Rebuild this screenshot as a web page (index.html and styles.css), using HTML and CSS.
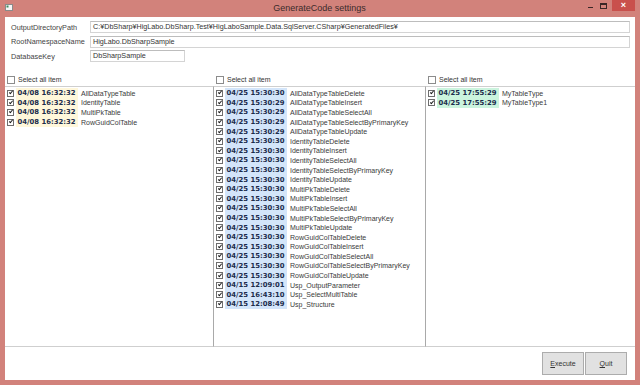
FILE: index.html
```html
<!DOCTYPE html>
<html lang="en">
  <head>
    <meta charset="UTF-8" />
    <title>GenerateCode settings</title>
    <link rel="stylesheet" href="styles.css">
  </head>
  <body>
    <div class="window">
      <div class="titlebar">
        <svg class="titlebar__icon" width="8" height="7" viewBox="0 0 8 7">
          <rect x="0.5" y="0.5" width="7" height="6" fill="#f4f4f4" stroke="#8a8a8a" />
          <rect x="1.5" y="1.5" width="2" height="2" fill="#3a8a5a" />
        </svg>
        <div class="titlebar__title">GenerateCode settings</div>
        <div class="titlebar__controls">
          <span class="ctl ctl--min"></span>
          <span class="ctl ctl--max"></span>
          <span class="ctl ctl--close">&times;</span>
        </div>
      </div>

      <div class="client">
        <div class="form">
          <div class="form__row">
            <span class="form__label">OutputDirectoryPath</span>
            <div class="form__input">C:&yen;DbSharp&yen;HigLabo.DbSharp.Test&yen;HigLaboSample.Data.SqlServer.CSharp&yen;GeneratedFiles&yen;</div>
          </div>
          <div class="form__row">
            <span class="form__label">RootNamespaceName</span>
            <div class="form__input">HigLabo.DbSharpSample</div>
          </div>
          <div class="form__row">
            <span class="form__label">DatabaseKey</span>
            <div class="form__input form__input--short">DbSharpSample</div>
          </div>
        </div>

        <div class="lists">
          <div class="col col--table">
            <div class="col__head"><span class="cb"></span>Select all item</div>
            <div class="col__list">
              <div class="item"><span class="cb cb--on"></span><span class="item__date">04/08 16:32:32</span><span class="item__name">AllDataTypeTable</span></div>
              <div class="item"><span class="cb cb--on"></span><span class="item__date">04/08 16:32:32</span><span class="item__name">IdentityTable</span></div>
              <div class="item"><span class="cb cb--on"></span><span class="item__date">04/08 16:32:32</span><span class="item__name">MultiPkTable</span></div>
              <div class="item"><span class="cb cb--on"></span><span class="item__date">04/08 16:32:32</span><span class="item__name">RowGuidColTable</span></div>
            </div>
          </div>

          <div class="col col--proc">
            <div class="col__head"><span class="cb"></span>Select all item</div>
            <div class="col__list">
              <div class="item"><span class="cb cb--on"></span><span class="item__date">04/25 15:30:30</span><span class="item__name">AllDataTypeTableDelete</span></div>
              <div class="item"><span class="cb cb--on"></span><span class="item__date">04/25 15:30:29</span><span class="item__name">AllDataTypeTableInsert</span></div>
              <div class="item"><span class="cb cb--on"></span><span class="item__date">04/25 15:30:29</span><span class="item__name">AllDataTypeTableSelectAll</span></div>
              <div class="item"><span class="cb cb--on"></span><span class="item__date">04/25 15:30:29</span><span class="item__name">AllDataTypeTableSelectByPrimaryKey</span></div>
              <div class="item"><span class="cb cb--on"></span><span class="item__date">04/25 15:30:29</span><span class="item__name">AllDataTypeTableUpdate</span></div>
              <div class="item"><span class="cb cb--on"></span><span class="item__date">04/25 15:30:30</span><span class="item__name">IdentityTableDelete</span></div>
              <div class="item"><span class="cb cb--on"></span><span class="item__date">04/25 15:30:30</span><span class="item__name">IdentityTableInsert</span></div>
              <div class="item"><span class="cb cb--on"></span><span class="item__date">04/25 15:30:30</span><span class="item__name">IdentityTableSelectAll</span></div>
              <div class="item"><span class="cb cb--on"></span><span class="item__date">04/25 15:30:30</span><span class="item__name">IdentityTableSelectByPrimaryKey</span></div>
              <div class="item"><span class="cb cb--on"></span><span class="item__date">04/25 15:30:30</span><span class="item__name">IdentityTableUpdate</span></div>
              <div class="item"><span class="cb cb--on"></span><span class="item__date">04/25 15:30:30</span><span class="item__name">MultiPkTableDelete</span></div>
              <div class="item"><span class="cb cb--on"></span><span class="item__date">04/25 15:30:30</span><span class="item__name">MultiPkTableInsert</span></div>
              <div class="item"><span class="cb cb--on"></span><span class="item__date">04/25 15:30:30</span><span class="item__name">MultiPkTableSelectAll</span></div>
              <div class="item"><span class="cb cb--on"></span><span class="item__date">04/25 15:30:30</span><span class="item__name">MultiPkTableSelectByPrimaryKey</span></div>
              <div class="item"><span class="cb cb--on"></span><span class="item__date">04/25 15:30:30</span><span class="item__name">MultiPkTableUpdate</span></div>
              <div class="item"><span class="cb cb--on"></span><span class="item__date">04/25 15:30:30</span><span class="item__name">RowGuidColTableDelete</span></div>
              <div class="item"><span class="cb cb--on"></span><span class="item__date">04/25 15:30:30</span><span class="item__name">RowGuidColTableInsert</span></div>
              <div class="item"><span class="cb cb--on"></span><span class="item__date">04/25 15:30:30</span><span class="item__name">RowGuidColTableSelectAll</span></div>
              <div class="item"><span class="cb cb--on"></span><span class="item__date">04/25 15:30:30</span><span class="item__name">RowGuidColTableSelectByPrimaryKey</span></div>
              <div class="item"><span class="cb cb--on"></span><span class="item__date">04/25 15:30:30</span><span class="item__name">RowGuidColTableUpdate</span></div>
              <div class="item"><span class="cb cb--on"></span><span class="item__date">04/15 12:09:01</span><span class="item__name">Usp_OutputParameter</span></div>
              <div class="item"><span class="cb cb--on"></span><span class="item__date">04/25 16:43:10</span><span class="item__name">Usp_SelectMultiTable</span></div>
              <div class="item"><span class="cb cb--on"></span><span class="item__date">04/15 12:08:49</span><span class="item__name">Usp_Structure</span></div>
            </div>
          </div>

          <div class="col col--type">
            <div class="col__head"><span class="cb"></span>Select all item</div>
            <div class="col__list">
              <div class="item"><span class="cb cb--on"></span><span class="item__date">04/25 17:55:29</span><span class="item__name">MyTableType</span></div>
              <div class="item"><span class="cb cb--on"></span><span class="item__date">04/25 17:55:29</span><span class="item__name">MyTableType1</span></div>
            </div>
          </div>
        </div>

        <div class="actions">
          <button class="btn"><u>E</u>xecute</button>
          <button class="btn"><u>Q</u>uit</button>
        </div>
      </div>
    </div>
  </body>
</html>
```

FILE: styles.css
```css
*,
*::before,
*::after {
  box-sizing: border-box;
  margin: 0;
  padding: 0;
}

:root {
  --frame: #d2827b;
  --close: #c9504c;
  --text: #3a3a3a;
  --line: #cfcfcf;
  --sep: #a9a9a9;
}

body {
  width: 640px;
  height: 385px;
  overflow: hidden;
  background-color: var(--frame);
  font-family: "Liberation Sans", Arial, sans-serif;
  color: var(--text);
}

.window {
  display: flex;
  flex-direction: column;
  height: 385px;
}

/* title bar */
.titlebar {
  display: flex;
  align-items: flex-start;
  height: 17px;
}
.titlebar__icon {
  margin: 4px 0 0 5px;
}
.titlebar__title {
  flex: 1;
  text-align: center;
  font-size: 9px;
  line-height: 17px;
  color: #3c2c2c;
  padding-left: 42px;
}
.titlebar__controls {
  display: flex;
  align-items: flex-start;
  margin-right: 5px;
}
.ctl {
  display: block;
  width: 13px;
  height: 11px;
  position: relative;
}
.ctl--min::after {
  content: "";
  position: absolute;
  left: 4px;
  top: 7px;
  width: 5px;
  height: 1px;
  background-color: #3a2626;
}
.ctl--max::after {
  content: "";
  position: absolute;
  left: 3px;
  top: 3px;
  width: 7px;
  height: 6px;
  border: 1px solid #3a2626;
  border-top-width: 2px;
}
.ctl--close {
  width: 23px;
  margin-left: 2px;
  background-color: var(--close);
  color: #fff;
  font-size: 9px;
  line-height: 10px;
  text-align: center;
  font-weight: bold;
}

/* client area */
.client {
  flex: 1;
  display: flex;
  flex-direction: column;
  margin: 0 5px 5px;
  background-color: #fff;
}

.form {
  display: flex;
  flex-direction: column;
  gap: 2.5px;
  padding: 4px 5px 0 6px;
  height: 45px;
}
.form__row {
  display: flex;
  align-items: center;
  height: 12px;
}
.form__label {
  width: 79px;
  font-size: 7.3px;
  color: #444;
}
.form__input {
  flex: 1;
  height: 12px;
  border: 1px solid #d4d4d4;
  border-top-color: #bdbdbd;
  font-size: 7.2px;
  line-height: 10px;
  padding-left: 2px;
  color: #333;
  white-space: nowrap;
}
.form__input--short {
  flex: none;
  width: 95px;
}

/* lists */
.lists {
  display: grid;
  grid-template-columns: 209px 212px 1fr;
  height: 285px;
}
.col {
  display: flex;
  flex-direction: column;
}
.col__head {
  display: flex;
  align-items: center;
  height: 24px;
  padding: 11px 0 0 2px;
  font-size: 7px;
  color: #333;
}
.col__head .cb {
  width: 8px;
  height: 8px;
  margin-right: 3px;
  border-color: #8c8c8c;
}
.col__list {
  flex: 1;
  border-top: 1px solid var(--line);
  border-bottom: 1px solid var(--line);
  padding-top: 1.5px;
}
.col--table .col__list,
.col--proc .col__list {
  border-right: 1px solid var(--sep);
}

.item {
  display: flex;
  align-items: center;
  height: 9.6px;
  font-size: 7px;
}
.cb {
  display: inline-block;
  position: relative;
  width: 7px;
  height: 7px;
  border: 1px solid #6e6e6e;
  background-color: #fff;
  flex: none;
}
.item .cb {
  margin: 0 2px;
}
.cb--on::after {
  content: "";
  position: absolute;
  left: 1.5px;
  top: -0.5px;
  width: 2px;
  height: 4px;
  border: solid #1e1e1e;
  border-width: 0 1.3px 1.3px 0;
  transform: rotate(40deg);
}
.item__date {
  width: 62px;
  height: 10px;
  line-height: 10px;
  padding-left: 1.5px;
  font-family: "DejaVu Sans", Verdana, sans-serif;
  font-weight: bold;
  font-size: 6.85px;
  color: #1c2c4c;
}
.item__name {
  margin-left: 3px;
  color: #3a3a3a;
  white-space: nowrap;
}
.col--table .item__date {
  background-color: #fff7da;
}
.col--proc .item__date {
  background-color: #d3e5fa;
}
.col--type .item__date {
  background-color: #cbf4de;
}

/* bottom buttons */
.actions {
  display: flex;
  justify-content: flex-end;
  align-items: flex-start;
  flex: 1;
  padding: 5px 8px 0 0;
}
.btn {
  width: 42px;
  height: 23px;
  border: 1px solid #acacac;
  background-color: #e1e1e1;
  font-family: "Liberation Sans", Arial, sans-serif;
  font-size: 7px;
  color: #333;
}
.btn + .btn {
  margin-left: 1px;
}
```
